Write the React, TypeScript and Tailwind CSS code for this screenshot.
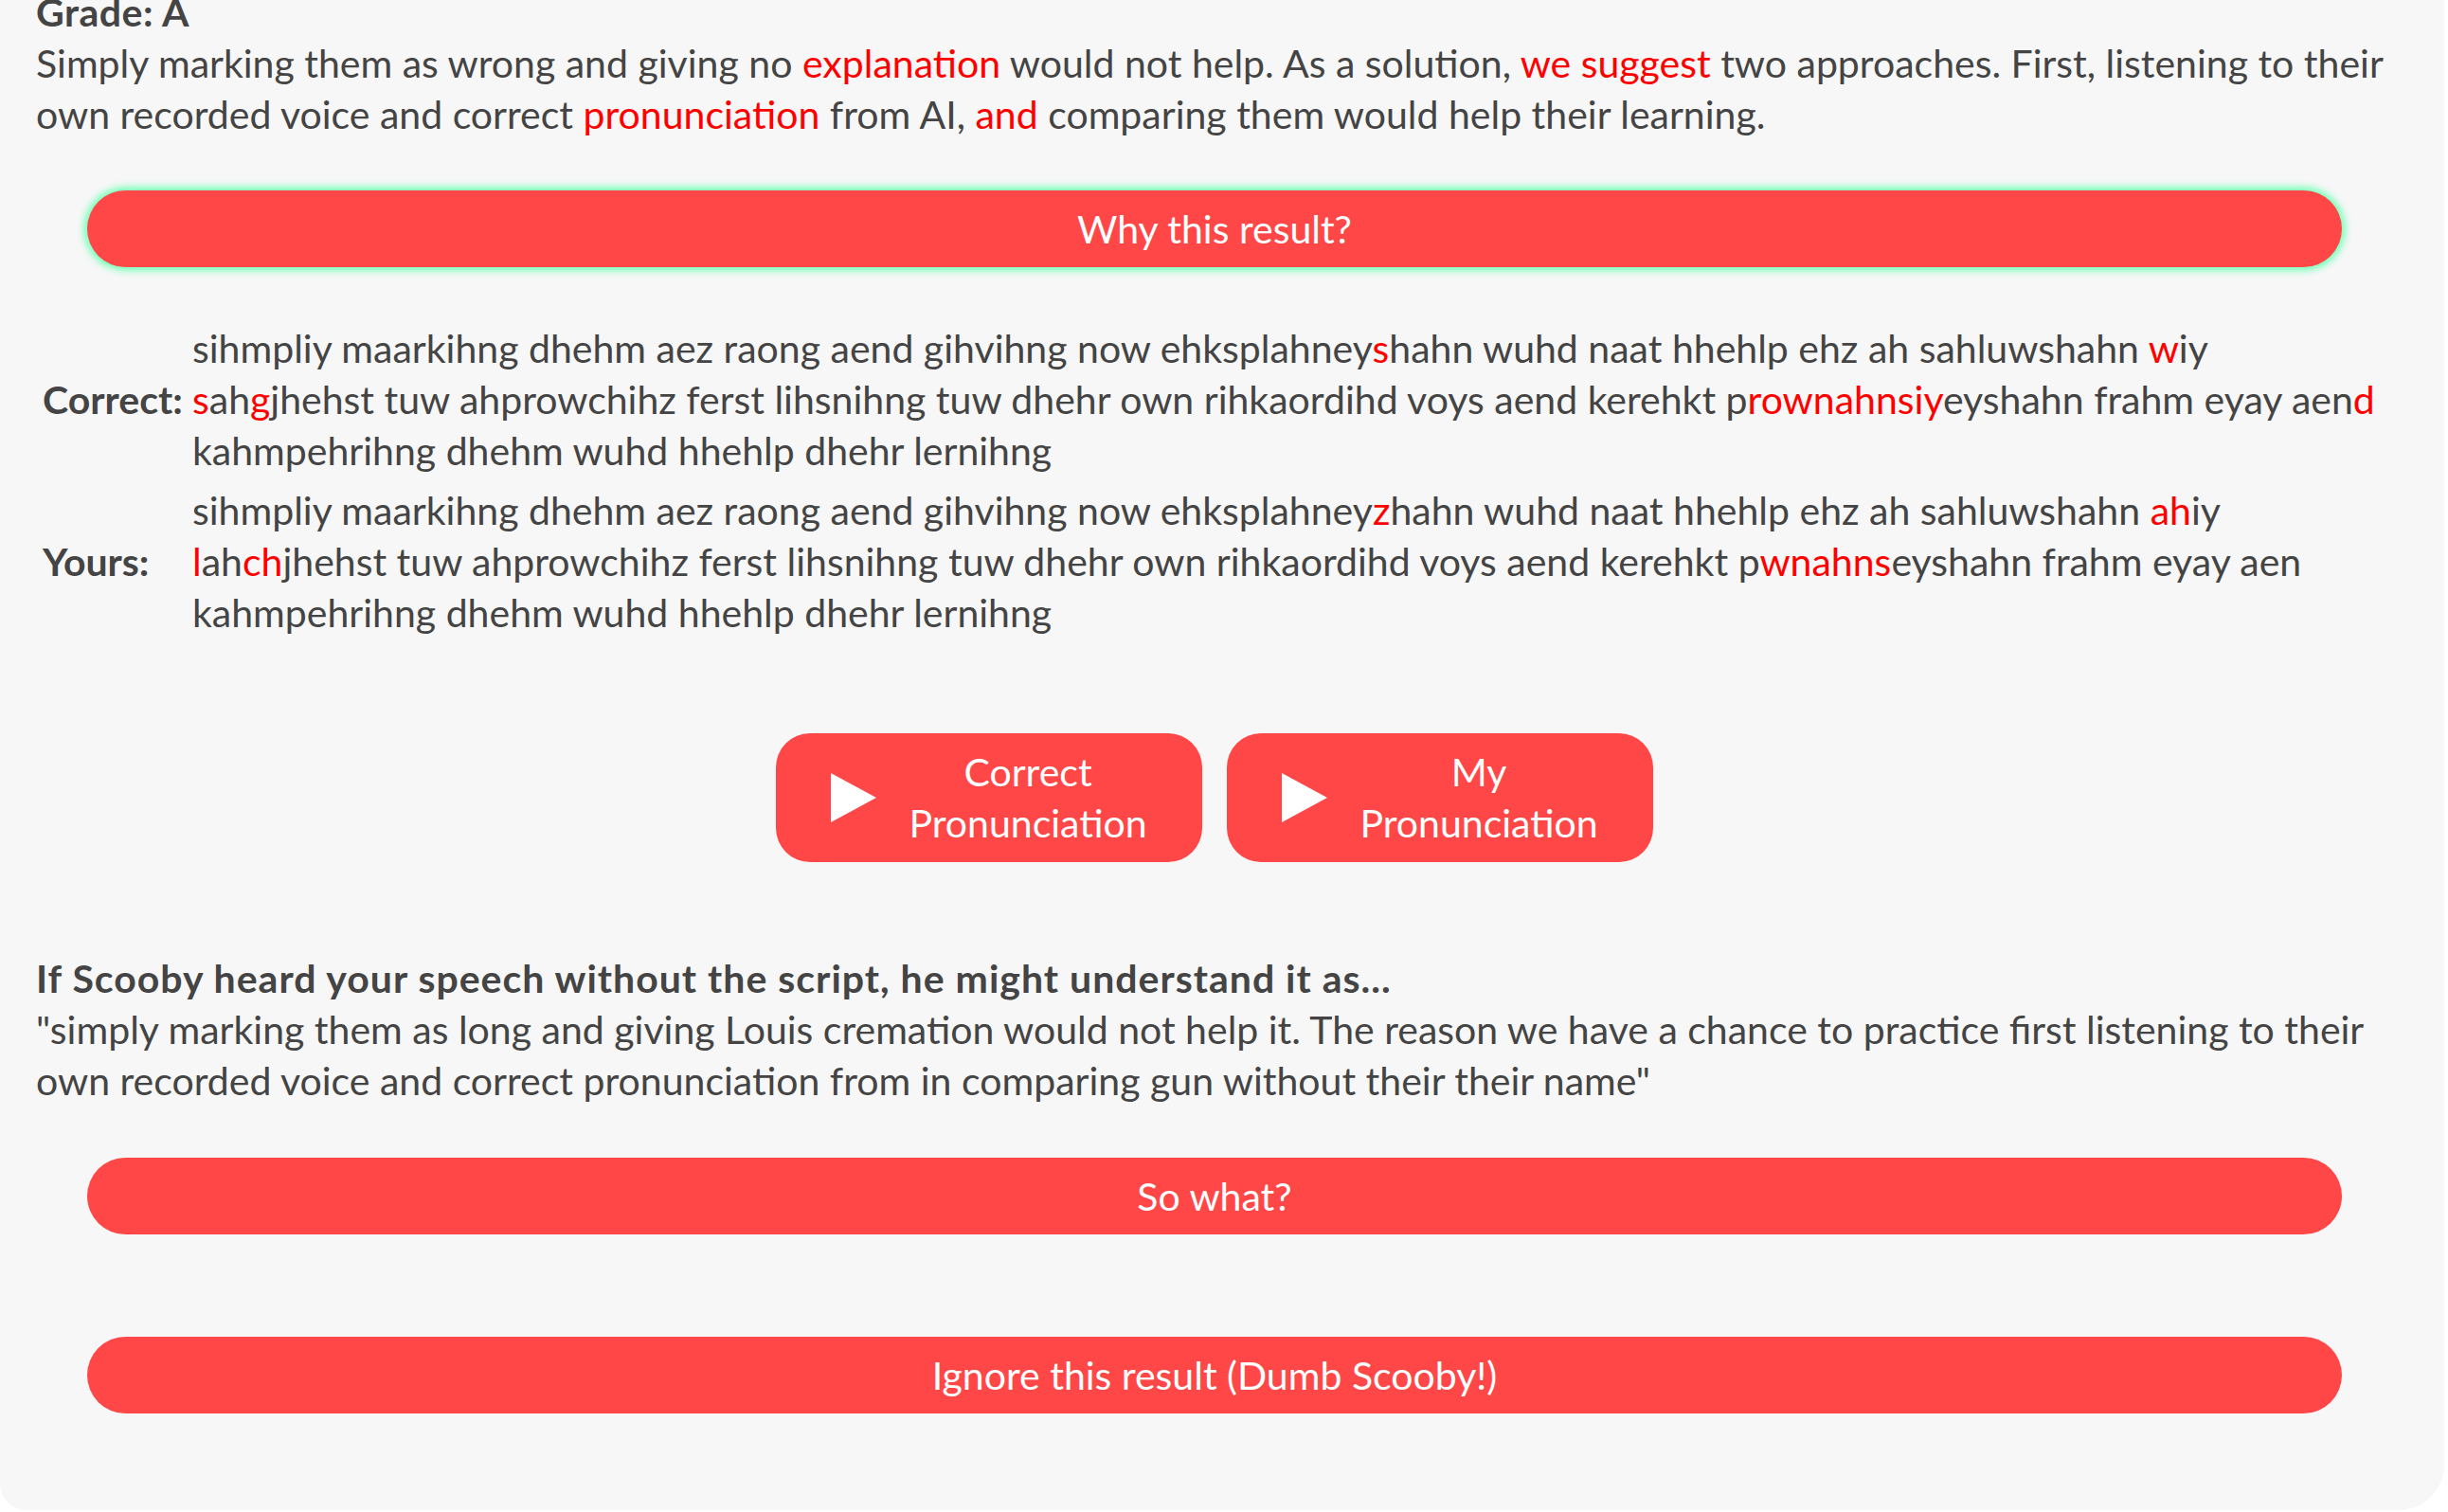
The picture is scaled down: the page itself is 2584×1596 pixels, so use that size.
import React from "react";

type Seg = [string, boolean?];

const RED = "text-[#ff0000]";

function Line({ segs }: { segs: Seg[] }) {
  return (
    <div className="whitespace-pre">
      {segs.map(([t, hot], i) =>
        hot ? (
          <span key={i} className={RED}>
            {t}
          </span>
        ) : (
          <span key={i}>{t}</span>
        ),
      )}
    </div>
  );
}

const correct: Seg[][] = [
  [
    ["sihmpliy maarkihng dhehm aez raong aend gihvihng now ehksplahney"],
    ["s", true],
    ["hahn wuhd naat hhehlp ehz ah sahluwshahn "],
    ["w", true],
    ["iy"],
  ],
  [
    ["s", true],
    ["ah"],
    ["g", true],
    ["jhehst tuw ahprowchihz ferst lihsnihng tuw dhehr own rihkaordihd voys aend kerehkt p"],
    ["rownahnsiy", true],
    ["eyshahn frahm eyay aen"],
    ["d", true],
  ],
  [["kahmpehrihng dhehm wuhd hhehlp dhehr lernihng"]],
];

const yours: Seg[][] = [
  [
    ["sihmpliy maarkihng dhehm aez raong aend gihvihng now ehksplahney"],
    ["z", true],
    ["hahn wuhd naat hhehlp ehz ah sahluwshahn "],
    ["ah", true],
    ["iy"],
  ],
  [
    ["l", true],
    ["ah"],
    ["ch", true],
    ["jhehst tuw ahprowchihz ferst lihsnihng tuw dhehr own rihkaordihd voys aend kerehkt p"],
    ["wnahns", true],
    ["eyshahn frahm eyay aen"],
  ],
  [["kahmpehrihng dhehm wuhd hhehlp dhehr lernihng"]],
];

function CompareRow({ label, lines }: { label: string; lines: Seg[][] }) {
  return (
    <div className="flex items-center py-[4px]">
      <div className="w-[165px] shrink-0 pl-[7px] font-bold">{label}</div>
      <div>
        {lines.map((l, i) => (
          <Line key={i} segs={l} />
        ))}
      </div>
    </div>
  );
}

function WideButton({ children, glow }: { children: React.ReactNode; glow?: boolean }) {
  return (
    <button
      className={
        "mx-[54px] flex h-[81px] items-center justify-center rounded-full bg-[#ff4747] text-white " +
        (glow ? "shadow-[0_0_7px_4px_#7dffbb]" : "")
      }
    >
      {children}
    </button>
  );
}

function PlayButton({ top, bottom }: { top: string; bottom: string }) {
  return (
    <button className="flex h-[136px] w-[450px] items-center rounded-[36px] bg-[#ff4747] pl-[58px] pr-[24px] text-white">
      <svg width="48" height="52" viewBox="0 0 48 52" className="shrink-0">
        <polygon points="0,0 48,26 0,52" fill="#ffffff" />
      </svg>
      <div className="flex-1 text-center">
        <div>{top}</div>
        <div>{bottom}</div>
      </div>
    </button>
  );
}

export default function App() {
  return (
    <div className="h-[1596px] overflow-hidden bg-white font-['Lato','Liberation_Sans',sans-serif] text-[41px] leading-[54px] text-[#444]">
      <div className="mr-[4px] h-[1594px] overflow-hidden rounded-bl-[28px] rounded-br-[48px] bg-[#f7f7f7] pl-[38px] pr-[54px]">
        <div className="mt-[-14px] flex flex-col">
          <div className="font-bold tracking-[0.5px]">Grade: A</div>
          <Line
            segs={[
              ["Simply marking them as wrong and giving no "],
              ["explanation", true],
              [" would not help. As a solution, "],
              ["we suggest", true],
              [" two approaches. First, listening to their"],
            ]}
          />
          <Line
            segs={[
              ["own recorded voice and correct "],
              ["pronunciation", true],
              [" from AI, "],
              ["and", true],
              [" comparing them would help their learning."],
            ]}
          />

          <div className="mt-[53px] flex flex-col">
            <WideButton glow>Why this result?</WideButton>
          </div>

          <div className="mt-[55px] flex flex-col gap-[1px]">
            <CompareRow label="Correct:" lines={correct} />
            <CompareRow label="Yours:" lines={yours} />
          </div>

          <div className="mt-[96px] flex justify-center gap-[26px]">
            <PlayButton top="Correct" bottom="Pronunciation" />
            <PlayButton top="My" bottom="Pronunciation" />
          </div>

          <div className="mt-[96px] font-bold tracking-[1px]">
            If Scooby heard your speech without the script, he might understand it as...
          </div>
          <div className="whitespace-pre">
            "simply marking them as long and giving Louis cremation would not help it. The reason we have a chance to practice first listening to their
          </div>
          <div className="whitespace-pre">
            own recorded voice and correct pronunciation from in comparing gun without their their name"
          </div>

          <div className="mt-[54px] flex flex-col">
            <WideButton>So what?</WideButton>
          </div>
          <div className="mt-[108px] flex flex-col">
            <WideButton>Ignore this result (Dumb Scooby!)</WideButton>
          </div>
        </div>
      </div>
    </div>
  );
}
